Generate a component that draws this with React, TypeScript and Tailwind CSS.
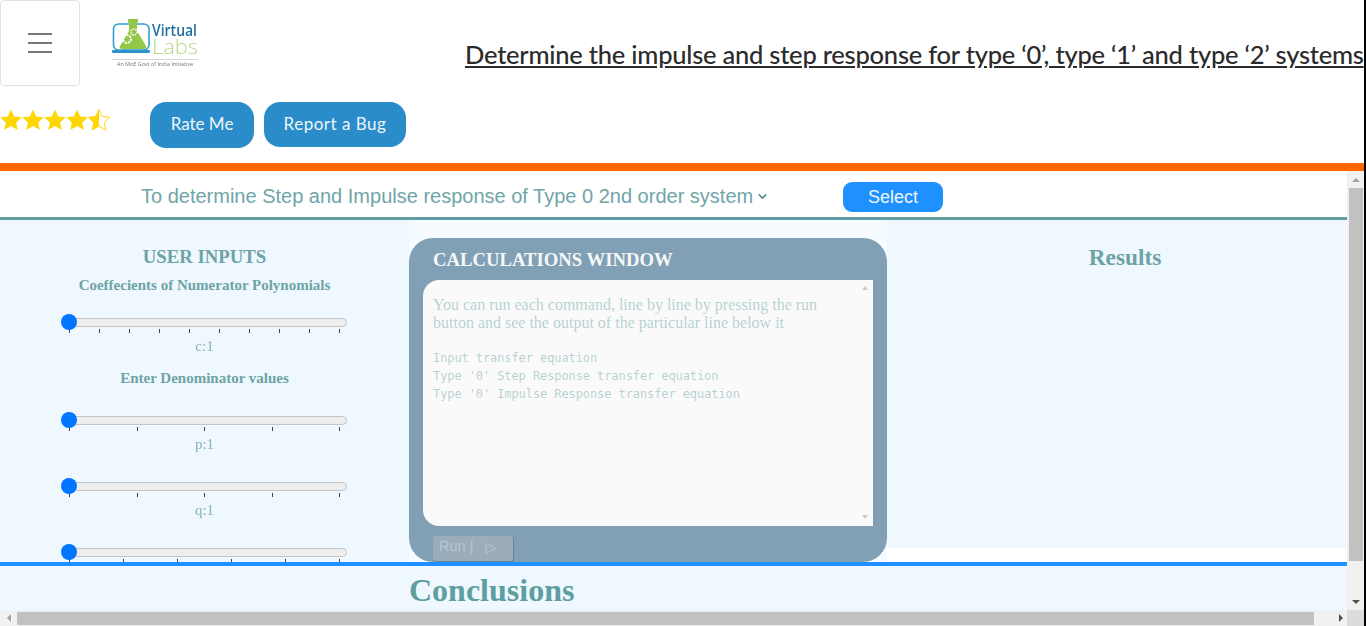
import { ChevronDown } from 'lucide-react'

function Logo() {
  return (
    <svg width="90" height="52" viewBox="0 0 90 52" className="blur-[0.4px]">
      <rect x="1.5" y="6" width="35.5" height="26" rx="5" fill="none" stroke="#2f9fd0" strokeWidth="1.6" />
      <rect x="0" y="32" width="38" height="3" rx="1" fill="#2a93c7" />
      <path d="M16 1h10v3l-1 1v8l9 15c1 2 0 3-2 3H10c-2 0-3-1-2-3l9-15V5l-1-1z" fill="#92c748" />
      <circle cx="15" cy="21" r="4" fill="none" stroke="#fff" strokeWidth="2" strokeDasharray="2 1" />
      <circle cx="22" cy="14" r="3" fill="none" stroke="#fff" strokeWidth="1.5" strokeDasharray="1.5 1" />
      <text x="40" y="18" fontSize="15.5" fontWeight="600" fill="#1f6f9f" fontFamily="Open Sans, sans-serif" textLength="45" lengthAdjust="spacingAndGlyphs">Virtual</text>
      <text x="40" y="36" fontSize="20" fontWeight="300" fill="#b5d98a" fontFamily="Open Sans, sans-serif" textLength="46" lengthAdjust="spacingAndGlyphs">Labs</text>
      <rect x="0" y="41" width="86" height="0.6" fill="#bbb" />
      <text x="5" y="48" fontSize="5.2" fill="#777" fontFamily="Open Sans, sans-serif" textLength="76" lengthAdjust="spacingAndGlyphs">An MoE Govt of India Initiative</text>
    </svg>
  )
}

const STAR = '11,0.5 14.2,7.5 21.8,8.3 16.2,13.4 17.8,21 11,17.1 4.2,21 5.8,13.4 0.2,8.3 7.8,7.5'

function Star({ half }: { half?: boolean }) {
  if (half) {
    return (
      <svg width="22" height="22" viewBox="0 0 22 22">
        <polygon points={STAR} fill="#fff" stroke="#ffd700" strokeWidth="1" />
        <polygon points="11,0.5 7.8,7.5 0.2,8.3 5.8,13.4 4.2,21 11,17.1" fill="#ffd700" />
      </svg>
    )
  }
  return (
    <svg width="22" height="22" viewBox="0 0 22 22">
      <polygon points={STAR} fill="#ffd700" />
    </svg>
  )
}

function Slider({ ticks, label }: { ticks: number; label?: string }) {
  return (
    <div className="flex flex-col items-center">
      <div className="relative w-[285px] h-[9px] rounded-full bg-[#eeeeee] border border-[#c4c4c4]">
        <div className="absolute left-[-2px] top-[-5px] w-[16px] h-[16px] rounded-full bg-[#0075ff]" />
      </div>
      <div className="flex justify-between w-[271px] h-[4px] mt-[2px]">
        {Array.from({ length: ticks }).map((_, i) => (
          <div key={i} className="w-px h-[4px] bg-[#444]" />
        ))}
      </div>
      {label && <div className="text-[15px] leading-[18px] mt-[4px] text-[#6ea3a6] opacity-80">{label}</div>}
    </div>
  )
}

export default function App() {
  return (
    <div className="w-[1366px] h-[626px] overflow-hidden bg-black flex font-['Liberation_Serif',serif]">
      <div className="w-[1364px] h-full bg-white flex flex-col">
        {/* Header */}
        <div className="flex h-[86px] shrink-0">
          <div className="w-[80px] h-[86px] shrink-0 flex flex-col items-center justify-center gap-[7px] border border-[#e2e2e2] rounded-[4px]">
            <div className="w-[24px] h-[2px] bg-[#777]" />
            <div className="w-[24px] h-[2px] bg-[#777]" />
            <div className="w-[24px] h-[2px] bg-[#777]" />
          </div>
          <div className="ml-[32px] mt-[18px] shrink-0">
            <Logo />
          </div>
          <h1 className="ml-[263px] mt-[39px] whitespace-nowrap underline text-[25.5px] leading-[30px] font-medium tracking-[-0.23px] text-[#2b2b2b] font-['Lato',sans-serif]">
            Determine the impulse and step response for type ‘0’, type ‘1’ and type ‘2’ systems
          </h1>
        </div>

        <div className="flex h-[77px] shrink-0 items-start">
          <div className="flex w-[150px] pt-[23px]">
            <Star />
            <Star />
            <Star />
            <Star />
            <Star half />
          </div>
          <button className="mt-[16px] w-[104px] h-[46px] pb-[2px] rounded-[16px] bg-[#2a8cc8] text-[#eef6fb] text-[17px] font-['Lato',sans-serif]">
            Rate Me
          </button>
          <button className="ml-[10px] mt-[16px] w-[142px] h-[45px] pb-[2px] rounded-[16px] bg-[#2a8cc8] text-[#eef6fb] text-[17px] tracking-[0.5px] font-['Lato',sans-serif]">
            Report a Bug
          </button>
        </div>

        <div className="h-[8px] shrink-0 bg-[#ff6600]" />

        {/* Scroll frame */}
        <div className="flex flex-1 min-h-0">
          <div className="w-[1347px] flex flex-col">
            <div className="h-[46px] shrink-0 flex items-start font-['Liberation_Sans',sans-serif]">
              <div className="ml-[141px] mt-[13px] w-[702px] flex items-center text-[20px] leading-[24px] text-[#6fa5a7]">
                To determine Step and Impulse response of Type 0 2nd order system
                <ChevronDown size={13} strokeWidth={3} className="ml-[3px] text-[#4f8f91]" />
              </div>
              <button className="mt-[11px] w-[100px] h-[30px] rounded-[9px] bg-[#1e90ff] text-[#eef6fb] text-[18px]">Select</button>
            </div>
            <div className="h-[3px] shrink-0 bg-[#5f9ea0]" />

            <div className="h-[342px] shrink-0 flex overflow-hidden">
              {/* User inputs */}
              <div className="w-[409px] bg-[#eff8ff] flex flex-col items-center text-[#6ea3a6] pt-[26px]">
                <div className="text-[18.75px] leading-[22px] font-bold">USER INPUTS</div>
                <div className="text-[15px] leading-[18px] font-bold mt-[8px]">Coeffecients of Numerator Polynomials</div>
                <div className="mt-[24px]">
                  <Slider ticks={10} label="c:1" />
                </div>
                <div className="text-[15px] leading-[18px] font-bold mt-[14px]">Enter Denominator values</div>
                <div className="mt-[29px]">
                  <Slider ticks={5} label="p:1" />
                </div>
                <div className="mt-[29px]">
                  <Slider ticks={5} label="q:1" />
                </div>
                <div className="mt-[29px]">
                  <Slider ticks={6} />
                </div>
              </div>

              {/* Calculations */}
              <div className="w-[478px] bg-[#f6fbff] pt-[18px]">
                <div className="h-[324px] rounded-[24px] bg-[#81a0b5] px-[14px] flex flex-col">
                  <div className="h-[42px] shrink-0 pl-[10px] pt-[10px] text-[18.7px] leading-[24px] font-bold text-[#f6f8f8]">
                    CALCULATIONS WINDOW
                  </div>
                  <div className="relative h-[246px] shrink-0 bg-[#fafafa] rounded-bl-[16px] rounded-tl-[16px] pl-[10px] pt-[16px] text-[#5f9ea0]/45">
                    <div className="text-[16px] leading-[18px] w-[410px]">
                      You can run each command, line by line by pressing the run button and see the output of the particular line below it
                    </div>
                    <div className="mt-[17px] text-[12px] leading-[18px] font-['DejaVu_Sans_Mono',monospace] tracking-[-0.09px]">
                      <div>Input transfer equation</div>
                      <div>Type '0' Step Response transfer equation</div>
                      <div>Type '0' Impulse Response transfer equation</div>
                    </div>
                    <div className="absolute right-[5px] top-[6px] border-x-[3.5px] border-x-transparent border-b-[4px] border-b-[#ccc]" />
                    <div className="absolute right-[5px] bottom-[7px] border-x-[3.5px] border-x-transparent border-t-[4px] border-t-[#ccc]" />
                  </div>
                  <button className="ml-[10px] mt-[10px] w-[80px] h-[25px] rounded-[3px] bg-[#9bacbb] shadow-[1px_1px_1px_rgba(0,0,0,0.2)] flex items-center pl-[6px] pb-[3px] text-[14.5px] text-[#b9c7d3] font-['Liberation_Sans',sans-serif]">
                    Run |
                    <svg width="13" height="13" viewBox="0 0 13 13" className="ml-[11px] mt-[3px]">
                      <path d="M2 1.5 11.5 6.5 2 11.5z" fill="none" stroke="#b9c7d3" strokeWidth="1" />
                    </svg>
                  </button>
                </div>
              </div>

              {/* Results */}
              <div className="w-[460px] flex flex-col">
                <div className="h-[328px] bg-[#eff8ff] pt-[24px] pl-[16px] text-center text-[23.3px] leading-[26px] font-bold text-[#6ea3a6]">
                  Results
                </div>
              </div>
            </div>

            <div className="h-[4px] shrink-0 bg-[#1e90ff]" />
            <div className="h-[44px] shrink-0 bg-[#eff8ff] pl-[409px] pt-[6px] text-[32px] leading-[36px] font-bold text-[#5f9ea0]">
              Conclusions
            </div>
          </div>

          {/* Vertical scrollbar */}
          <div className="w-[17px] bg-[#f1f1f1] flex flex-col items-center">
            <div className="h-[17px] flex items-center justify-center">
              <div className="border-x-[4px] border-x-transparent border-b-[4px] border-b-[#a3a3a3]" />
            </div>
            <div className="w-[14px] h-[373px] bg-[#c1c1c1]" />
            <div className="mt-auto h-[17px] flex items-center justify-center">
              <div className="border-x-[4px] border-x-transparent border-t-[4px] border-t-[#505050]" />
            </div>
          </div>
        </div>

        {/* Horizontal scrollbar */}
        <div className="h-[16px] shrink-0 bg-[#f1f1f1] flex items-center">
          <div className="w-[17px] flex items-center justify-center">
            <div className="border-y-[4px] border-y-transparent border-r-[4px] border-r-[#a3a3a3]" />
          </div>
          <div className="w-[1297px] h-[13px] bg-[#c1c1c1]" />
          <div className="ml-[20px] w-[13px] flex items-center justify-center">
            <div className="border-y-[4px] border-y-transparent border-l-[4px] border-l-[#505050]" />
          </div>
          <div className="ml-auto w-[17px] h-[16px] bg-[#dcdcdc]" />
        </div>
      </div>
    </div>
  )
}
